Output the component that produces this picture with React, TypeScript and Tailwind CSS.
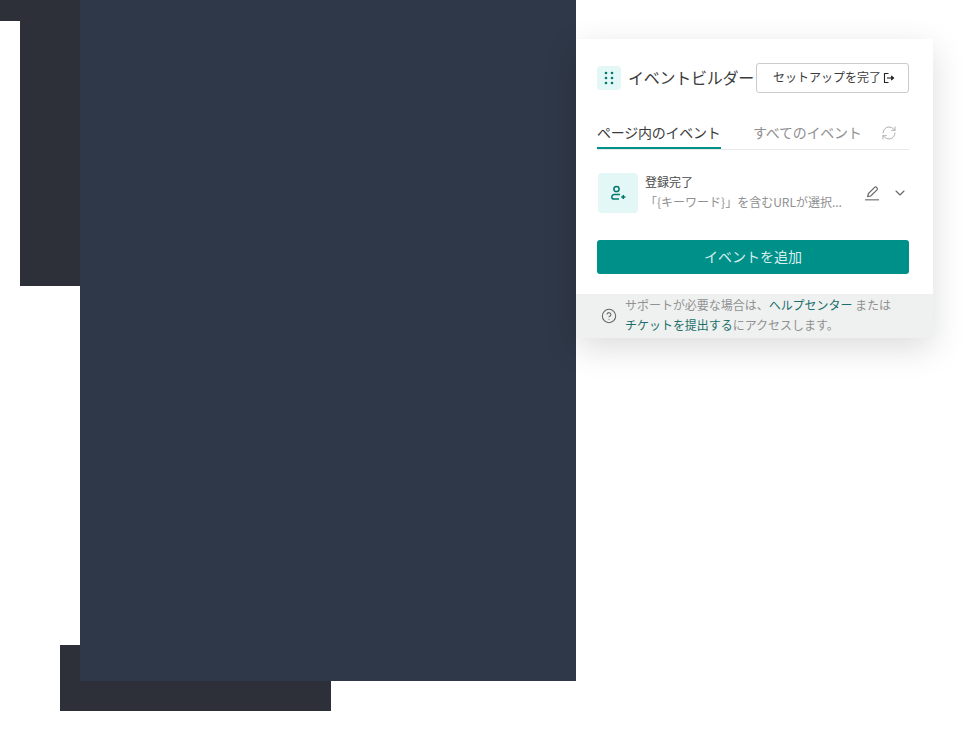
import React from "react";
import { ChevronDown, CircleHelp, RefreshCw } from "lucide-react";

const font = "font-['Noto_Sans_CJK_JP','Noto_Sans',sans-serif]";

const GripIcon = () => (
  <svg width="10" height="14" viewBox="0 0 10 14" fill="#00786f">
    <circle cx="2" cy="2" r="1.3" />
    <circle cx="8" cy="2" r="1.3" />
    <circle cx="2" cy="7" r="1.3" />
    <circle cx="8" cy="7" r="1.3" />
    <circle cx="2" cy="12" r="1.3" />
    <circle cx="8" cy="12" r="1.3" />
  </svg>
);

const ExitIcon = () => (
  <svg width="12" height="12" viewBox="0 0 12 12" fill="none" stroke="#222" strokeWidth="1.1">
    <path d="M5.5 1.5H1.5V10.5H5.5" />
    <path d="M4 6H10" />
    <path d="M8.2 3.8L10.6 6L8.2 8.2" fill="#222" />
  </svg>
);

const UserPlusIcon = () => (
  <svg width="16" height="16" viewBox="0 0 16 16" fill="none" stroke="#00786f" strokeWidth="1.5">
    <circle cx="6.5" cy="4" r="2.6" />
    <path d="M10 9.6H4.2C2.8 9.6 1.8 10.6 1.8 11.9C1.8 13.2 2.8 14 4.2 14H9" />
    <path d="M11.2 12H15.4M13.3 10V14" />
  </svg>
);

const EditIcon = () => (
  <svg width="16" height="16" viewBox="0 0 16 16" fill="none" stroke="#666" strokeWidth="1.2">
    <path d="M3.6 11.6L4.4 8.6L10.6 2.4C11.2 1.8 12 1.8 12.6 2.4L13 2.8C13.6 3.4 13.6 4.2 13 4.8L6.8 11L3.6 11.6Z" />
    <path d="M1 14.8H15" strokeWidth="1.4" stroke="#888" />
  </svg>
);

export default function App() {
  return (
    <div className={`relative h-[748px] w-[962px] overflow-hidden bg-white ${font}`}>
      <div className="absolute left-0 top-0 h-[21px] w-[80px] bg-[#2d3039]" />
      <div className="absolute left-[20px] top-0 h-[286px] w-[60px] bg-[#2d3039]" />
      <div className="absolute left-[60px] top-[645px] h-[66px] w-[271px] bg-[#2d3039]" />

      <div className="relative flex items-start pl-[80px]">
        <div className="h-[681px] w-[496px] bg-[#2f3848]" />

        <div className="mt-[39px] w-[357px] bg-white shadow-[0_10px_32px_rgba(0,0,0,0.14)]">
          <div className="px-[21px] pt-[24px]">
            <div className="flex h-[30px] items-center justify-between pr-[3px]">
              <div className="flex items-center">
                <div className="flex h-[24px] w-[24px] items-center justify-center rounded bg-[#e3f7f6]">
                  <GripIcon />
                </div>
                <span className="ml-[7px] mt-[-2px] whitespace-nowrap text-[16px] tracking-[-0.25px] text-[#3c3c3c]">イベントビルダー</span>
              </div>
              <button className="flex h-[30px] w-[153px] items-center justify-center gap-[2px] rounded-[3px] border border-[#c9cbce] bg-white pl-[3px] text-[12px] text-[#3c3c3c]">
                <span className="mt-[-2px]">セットアップを完了</span>
                <ExitIcon />
              </button>
            </div>

            <div className="mt-[24px] mr-[3px] flex h-[33px] items-start border-b border-[#e8e9ea] text-[14px] tracking-[-0.25px]">
              <div className="h-[32px] w-[124px] whitespace-nowrap border-b-2 border-[#00908a] pt-[3px] leading-[24px] text-[#3c3c3c]">
                ページ内のイベント
              </div>
              <div className="ml-[32px] whitespace-nowrap pt-[3px] leading-[24px] text-[#909090]">すべてのイベント</div>
              <RefreshCw className="ml-[20px] mt-[8px] text-[#aaa]" size={16} strokeWidth={1.4} />
            </div>

            <div className="mt-[23px] flex items-center pl-px pr-[3px]">
              <div className="flex h-[40px] w-[40px] items-center justify-center rounded bg-[#e3f7f6]">
                <UserPlusIcon />
              </div>
              <div className="ml-[7px] mt-[-3px] w-[208px]">
                <div className="text-[12px] leading-[19px] text-[#4a4a4a]">登録完了</div>
                <div className="mt-px whitespace-nowrap text-[12px] leading-[20px] text-[#909090]">「{"{"}キーワード{"}"}」を含むURLが選択...</div>
              </div>
              <div className="ml-[11px] flex items-center">
                <EditIcon />
              </div>
              <ChevronDown className="ml-[12px] text-[#666]" size={16} strokeWidth={1.6} />
            </div>

            <button className="mt-[27px] mr-[3px] flex h-[34px] w-[312px] items-center justify-center rounded-[3px] bg-[#00908a] pb-[2px] text-[14px] text-[#d8eeec]">
              イベントを追加
            </button>
          </div>

          <div className="mt-[20px] flex h-[44px] items-center bg-[#eff1f0] pl-[25px]">
            <CircleHelp className="text-[#666]" size={16} strokeWidth={1.6} />
            <div className="ml-[8px] mt-[-2px] text-[12px] leading-[20px] tracking-[-0.03px] text-[#909090]">
              <div className="whitespace-nowrap">
                サポートが必要な場合は、<span className="text-[#1b6f6b]">ヘルプセンター</span> または
              </div>
              <div className="whitespace-nowrap">
                <span className="text-[#1b6f6b]">チケットを提出する</span>にアクセスします。
              </div>
            </div>
          </div>
        </div>
      </div>
    </div>
  );
}
